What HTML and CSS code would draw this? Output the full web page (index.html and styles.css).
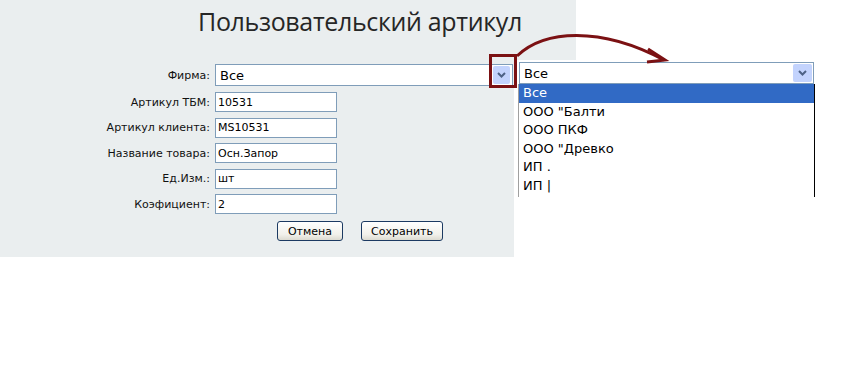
FILE: index.html
```html
<!DOCTYPE html>
<html lang="ru">
<head>
  <meta charset="UTF-8" />
  <title>Пользовательский артикул</title>
  <link rel="stylesheet" href="styles.css">
</head>
<body>
  <!-- Edit form -->
  <div class="panel">
    <div class="page">
      <h1 class="title">Пользовательский артикул</h1>
      <form class="form">
        <label class="label">Фирма:</label>
        <div class="combo combo-form">
          <span class="combo-text">Все</span>
          <span class="combo-btn">
            <svg width="9" height="6" viewBox="0 0 9 6"><polyline points="1,1 4.5,4.5 8,1" fill="none" stroke="#4d6185" stroke-width="2"/></svg>
          </span>
        </div>
        <label class="label">Артикул ТБМ:</label>
        <input class="field" type="text" value="10531" />
        <label class="label">Артикул клиента:</label>
        <input class="field" type="text" value="MS10531" />
        <label class="label">Название товара:</label>
        <input class="field" type="text" value="Осн.Запор" />
        <label class="label">Ед.Изм.:</label>
        <input class="field" type="text" value="шт" />
        <label class="label">Коэфициент:</label>
        <input class="field" type="text" value="2" />
        <div class="actions">
          <button type="button" class="btn btn-cancel">Отмена</button>
          <button type="button" class="btn btn-save">Сохранить</button>
        </div>
      </form>
    </div>
  </div>

  <!-- Opened dropdown (callout) -->
  <div class="popup">
    <div class="combo combo-popup">
      <span class="combo-text">Все</span>
      <span class="combo-btn">
        <svg width="9" height="6" viewBox="0 0 9 6"><polyline points="1,1 4.5,4.5 8,1" fill="none" stroke="#4d6185" stroke-width="2"/></svg>
      </span>
    </div>
    <ul class="list">
      <li class="item selected">Все</li>
      <li class="item">ООО "Балти</li>
      <li class="item">ООО ПКФ</li>
      <li class="item">ООО "Древко</li>
      <li class="item">ИП .</li>
      <li class="item">ИП |</li>
    </ul>
  </div>

  <!-- Annotation -->
  <div class="marker"></div>
  <svg class="arrow" width="842" height="100" viewBox="0 0 842 100">
    <path d="M517 56 C544 30 600 26 664 60" fill="none" stroke="#7b1113" stroke-width="3" />
    <polyline points="648,49 665,60 647,62" fill="none" stroke="#7b1113" stroke-width="3" />
  </svg>
</body>
</html>
```

FILE: styles.css
```css
* {
  box-sizing: border-box;
}
body {
  margin: 0;
  background: #fff;
  font-family: 'DejaVu Sans', sans-serif;
  color: #000;
  position: relative;
  width: 842px;
  height: 382px;
  overflow: hidden;
}
/* Edit form */
.panel {
  width: 576px;
  height: 257px;
  background: #eaeeef;
  overflow: hidden;
}
.page {
  width: 720px;
}
.title {
  margin: 0;
  padding-top: 5px;
  height: 47px;
  font-family: 'Open Sans', sans-serif;
  font-weight: normal;
  font-size: 25px;
  letter-spacing: -0.35px;
  line-height: 32px;
  color: #262626;
  text-align: center;
}
.form {
  margin-top: 17px;
  display: grid;
  grid-template-columns: 210px 1fr;
  column-gap: 5px;
  row-gap: 5.5px;
  align-items: center;
}
.label {
  text-align: right;
  font-size: 11px;
  color: #111;
}
.field {
  width: 122px;
  height: 20px;
  margin: 0;
  padding: 0 2px;
  border: 1px solid #7f9db9;
  background: #fff;
  font-family: 'DejaVu Sans', sans-serif;
  font-size: 11px;
  color: #000;
}
.combo {
  display: flex;
  align-items: center;
  justify-content: space-between;
  background: #fff;
  border: 1px solid #7f9db9;
  font-size: 13px;
}
.combo-form {
  width: 298px;
  height: 22px;
  margin-bottom: 0.5px;
  padding: 0 2px 0 4px;
}
.combo-btn {
  width: 17px;
  height: 18px;
  display: flex;
  align-items: center;
  justify-content: center;
  background: #c3d3fd;
  border-radius: 2px;
}
.actions {
  grid-column: 1 / -1;
  margin-top: 1.5px;
  display: flex;
  justify-content: center;
  gap: 18px;
}
.btn {
  height: 20px;
  padding: 0;
  border: 1px solid #1c3a62;
  border-radius: 3px;
  background: linear-gradient(#ffffff, #f1f0ea 70%, #dcdad0);
  font-family: 'DejaVu Sans', sans-serif;
  font-size: 11px;
  color: #000;
}
.btn-cancel {
  width: 66px;
}
.btn-save {
  width: 82px;
}
/* Opened dropdown */
.popup {
  position: absolute;
  left: 514px;
  top: 60px;
  width: 328px;
  height: 197px;
  background: #fff;
}
.combo-popup {
  margin: 2px 0 0 5px;
  width: 295px;
  height: 22px;
  padding: 0 1px 0 4px;
}
.combo-popup .combo-btn {
  width: 19px;
}
.list {
  list-style: none;
  margin: 0 0 0 4px;
  padding: 0;
  width: 297px;
  height: 113px;
  border-left: 1px solid #a0a0a0;
  border-right: 1px solid #000;
  overflow: hidden;
}
.item {
  height: 18.5px;
  line-height: 18.5px;
  padding-left: 4px;
  font-size: 13px;
  color: #000;
  white-space: nowrap;
}
.item.selected {
  background: #316ac5;
  color: #fff;
}
/* Annotation */
.marker {
  position: absolute;
  left: 489px;
  top: 54px;
  width: 28px;
  height: 34px;
  border: 3px solid #7b1113;
}
.arrow {
  position: absolute;
  left: 0;
  top: 0;
}
```
